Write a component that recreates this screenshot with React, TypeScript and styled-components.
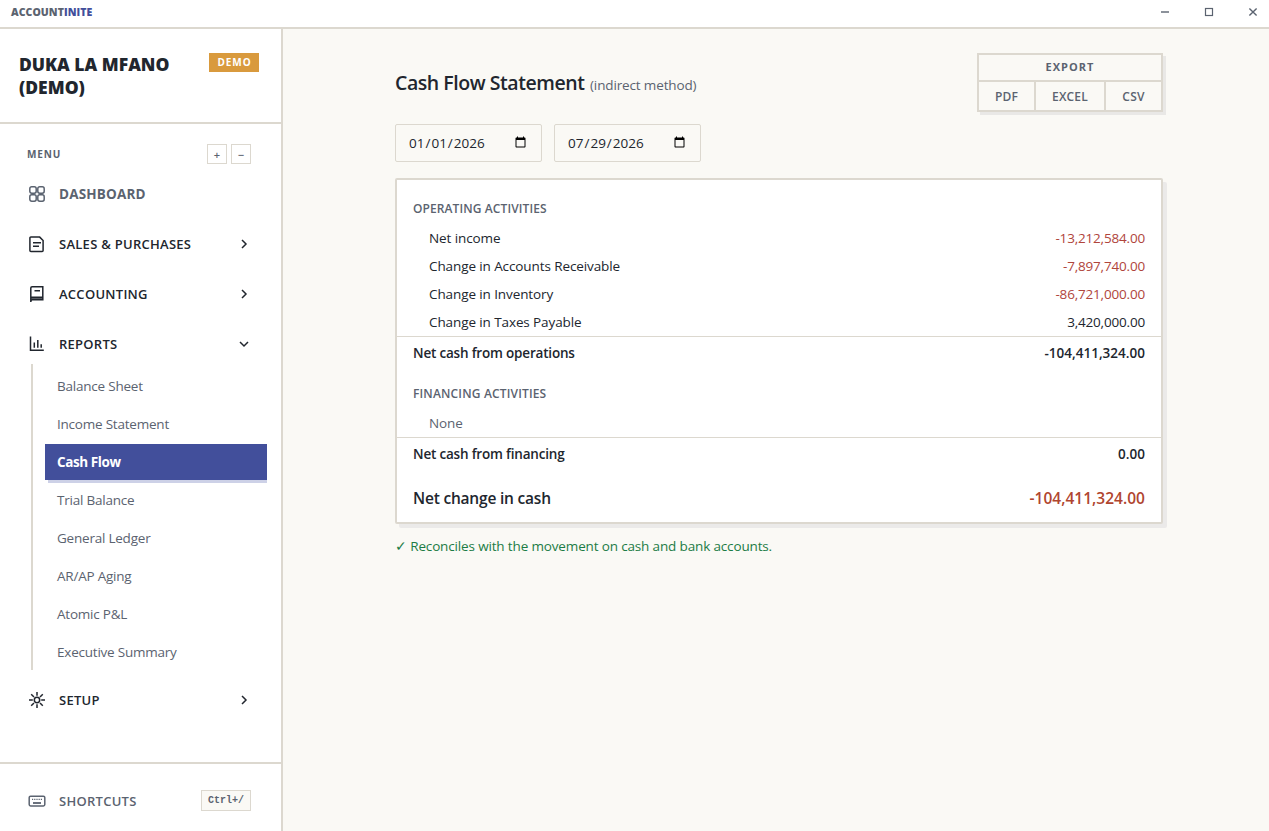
import React from "react";
import styled, { createGlobalStyle, css } from "styled-components";

const c = {
  ink: "#21262e",
  muted: "#5b6370",
  line: "#dcd8cf",
  page: "#faf9f5",
  brand: "#424f9b",
  brandSoft: "#cdd1e7",
  amber: "#d99a3d",
  red: "#b0453c",
  rust: "#b0452f",
  green: "#1c7c45",
};

const Global = createGlobalStyle`
  * { box-sizing: border-box; }
  body {
    margin: 0;
    background: ${c.page};
    color: ${c.ink};
    font-family: "Open Sans", "Noto Sans", sans-serif;
    font-size: 13.5px;
    overflow: hidden;
  }
`;

const Window = styled.div`
  height: 831px;
  display: flex;
  flex-direction: column;
`;

const TitleBar = styled.header`
  height: 29px;
  flex: none;
  display: flex;
  align-items: center;
  justify-content: space-between;
  padding: 0 10px 3px 11px;
  background: #fff;
  border-bottom: 2px solid ${c.line};
`;

const Brand = styled.span`
  font-size: 10.5px;
  font-weight: 800;
  line-height: 14px;
  letter-spacing: 0.06px;
  color: ${c.muted};
  em {
    font-style: normal;
    color: ${c.brand};
  }
`;

const WindowControls = styled.div`
  display: flex;
  gap: 32px;
  svg { display: block; }
`;

const Body = styled.div`
  flex: 1;
  min-height: 0;
  display: flex;
`;

const Sidebar = styled.aside`
  width: 283px;
  flex: none;
  display: flex;
  flex-direction: column;
  background: #fff;
  border-right: 2px solid ${c.line};
`;

const Company = styled.div`
  height: 95px;
  flex: none;
  display: flex;
  justify-content: space-between;
  align-items: flex-start;
  padding: 24px 22px 0 19px;
  border-bottom: 2px solid ${c.line};
`;

const CompanyName = styled.h2`
  margin: 0;
  width: 170px;
  font-size: 17.5px;
  font-weight: 800;
  line-height: 23px;
  letter-spacing: 0;
`;

const DemoBadge = styled.span`
  width: 50px;
  height: 19px;
  padding-left: 1px;
  text-align: center;
  background: ${c.amber};
  color: #fff;
  font-size: 10px;
  font-weight: 700;
  line-height: 19px;
  letter-spacing: 0.9px;
`;

const Nav = styled.nav`
  flex: 1;
  display: flex;
  flex-direction: column;
  padding: 20px 14px 0 15px;
`;

const MenuHead = styled.div`
  height: 20px;
  display: flex;
  align-items: center;
  gap: 4px;
  padding: 0 16px 0 12px;
  margin-bottom: 10px;
`;

const MenuLabel = styled.span`
  flex: 1;
  font-size: 10px;
  font-weight: 700;
  letter-spacing: 0.85px;
  color: ${c.muted};
`;

const SquareButton = styled.button`
  width: 20px;
  height: 20px;
  padding: 1px 0 0;
  background: #fff;
  border: 1px solid ${c.line};
  color: ${c.muted};
  font: 600 11px/16px "Open Sans", sans-serif;
`;

const NavRow = styled.a<{ $muted?: boolean; $big?: boolean }>`
  height: 40px;
  flex: none;
  display: flex;
  align-items: center;
  gap: 13px;
  padding: 0 16px 0 13px;
  margin-bottom: 10px;
  font-size: 13px;
  font-weight: 600;
  letter-spacing: 0.27px;
  color: ${(p) => (p.$muted ? c.muted : c.ink)};
  svg { display: block; flex: none; }
  ${(p) =>
    p.$big &&
    css`
      font-size: 13.5px;
      letter-spacing: 0.18px;
      font-weight: 700;
    `}
`;

const RowLabel = styled.span`
  flex: 1;
`;

const SubNav = styled.div`
  margin: -10px 0 10px 16px;
  padding: 4px 0 0 12px;
  border-left: 2px solid ${c.line};
  display: flex;
  flex-direction: column;
  gap: 2px;
  overflow: hidden;
`;

const SubItem = styled.a<{ $active?: boolean }>`
  height: 36px;
  padding-left: 12px;
  line-height: 36px;
  letter-spacing: -0.22px;
  color: ${c.muted};
  ${(p) =>
    p.$active &&
    css`
      background: ${c.brand};
      box-shadow: 3px 3px 0 ${c.brandSoft};
      color: #fff;
      font-weight: 700;
      letter-spacing: -0.4px;
    `}
`;

const SidebarFoot = styled.div`
  height: 69px;
  flex: none;
  padding: 17px 14px 0 15px;
  border-top: 2px solid ${c.line};
`;

const Kbd = styled.kbd`
  width: 50px;
  height: 21px;
  text-align: center;
  background: ${c.page};
  border: 1px solid ${c.line};
  color: ${c.muted};
  font: 700 10px/19px "Liberation Mono", monospace;
  letter-spacing: 0;
  margin-top: -1px;
`;

const Main = styled.main`
  flex: 1;
  padding: 24px 106px 0 112px;
`;

const PageHead = styled.div`
  height: 59px;
  display: flex;
  justify-content: space-between;
  margin-bottom: 12px;
`;

const Title = styled.h1`
  margin: 0;
  font-size: 19.5px;
  font-weight: 600;
  line-height: 60px;
  letter-spacing: -0.45px;
  small {
    margin-left: 1px;
    font-size: 13.5px;
    font-weight: 400;
    letter-spacing: -0.14px;
    color: ${c.muted};
  }
`;

const ExportBox = styled.div`
  width: 186px;
  height: 59px;
  border: 2px solid ${c.line};
  box-shadow: 3px 3px 0 #e9e8e6;
  color: ${c.muted};
`;

const ExportHead = styled.div`
  height: 27px;
  border-bottom: 2px solid ${c.line};
  text-align: center;
  font-size: 11px;
  font-weight: 700;
  line-height: 24px;
  letter-spacing: 1px;
`;

const ExportRow = styled.div`
  height: 28px;
  display: grid;
  grid-template-columns: 57px 70px 55px;
`;

const ExportButton = styled.button`
  padding: 2px 0 0;
  border: 0;
  border-right: 2px solid ${c.line};
  background: transparent;
  color: inherit;
  font: 600 12px/26px "Open Sans", sans-serif;
  letter-spacing: 0.2px;
  &:last-child { border-right: 0; }
`;

const Filters = styled.div`
  display: flex;
  gap: 12px;
  margin-bottom: 16px;
`;

const DateField = styled.input`
  width: 147px;
  height: 38px;
  padding: 0 12px;
  border: 1px solid ${c.line};
  border-radius: 2px;
  background: ${c.page};
  color: ${c.ink};
  font: 400 13.5px "Open Sans", sans-serif;
`;

const Card = styled.section`
  height: 346px;
  padding: 15px 0 0;
  background: #fff;
  border: 2px solid ${c.line};
  border-radius: 2px;
  box-shadow: 4px 4px 0 #ebeae9;
`;

const SectionLabel = styled.h3<{ $spaced?: boolean }>`
  margin: ${(p) => (p.$spaced ? "11px" : "0")} 0 1px;
  padding: 0 16px;
  height: 28px;
  font-size: 12px;
  font-weight: 600;
  line-height: 27px;
  letter-spacing: ${(p) => (p.$spaced ? "0.16px" : "0.1px")};
  color: ${c.muted};
`;

const Line = styled.div<{ $kind?: "total" | "grand"; $muted?: boolean }>`
  height: 28px;
  display: flex;
  justify-content: space-between;
  padding: 0 16px 0 32px;
  line-height: 28px;
  letter-spacing: -0.1px;
  color: ${(p) => (p.$muted ? c.muted : c.ink)};
  ${(p) =>
    p.$kind === "total" &&
    css`
      height: 33px;
      padding-left: 16px;
      border-top: 1px solid ${c.line};
      line-height: 32px;
      font-weight: 600;
      letter-spacing: -0.19px;
    `}
  ${(p) =>
    p.$kind === "grand" &&
    css`
      height: 44px;
      margin-top: 6px;
      padding-left: 16px;
      line-height: 44px;
      font-size: 15.5px;
      font-weight: 600;
      letter-spacing: -0.2px;
    `}
`;

const Amount = styled.span<{ $tone?: "red" | "rust"; $strong?: boolean }>`
  letter-spacing: ${(p) => (p.$strong ? "0.02px" : "-0.18px")};
  color: ${(p) => (p.$tone ? c[p.$tone] : "inherit")};
`;

const Note = styled.p`
  margin: 12px 0 0;
  line-height: 20px;
  letter-spacing: -0.15px;
  color: ${c.green};
`;

const Ico = ({ children }: { children: React.ReactNode }) => (
  <svg width="18" height="18" viewBox="0 0 18 18" fill="none" stroke="currentColor" strokeWidth="1.5">
    {children}
  </svg>
);

const GridIcon = () => (
  <Ico>
    <rect x="1.8" y="1.8" width="6.4" height="6.4" rx="1.9" />
    <rect x="9.8" y="1.8" width="6.4" height="6.4" rx="1.9" />
    <rect x="1.8" y="9.8" width="6.4" height="6.4" rx="1.9" />
    <rect x="9.8" y="9.8" width="6.4" height="6.4" rx="1.9" />
  </Ico>
);
const DocIcon = () => (
  <Ico>
    <path d="M2.9 2.1h8.8l3.4 3.4v9.9a1 1 0 0 1-1 1H2.9a1 1 0 0 1-1-1V3.1a1 1 0 0 1 1-1Z" />
    <path d="M5 7.8h8M5 11.2h6" />
  </Ico>
);
const BookIcon = () => (
  <Ico>
    <path d="M2.8 16.9V3.1c0-.8.6-1.3 1.3-1.3h10.7v12.9H4.4c-.9 0-1.6.8-1.6 2.2M2.8 12.2h12M6.5 5.8h5.5" />
    <path d="M3 12.2h11.8v2.4H3z" fill="currentColor" stroke="none" opacity=".75" />
  </Ico>
);
const ChartIcon = () => (
  <Ico>
    <path d="M2.5 1.6v13.7h13.3" />
    <path d="M6.3 7.6v5.2M9.8 5v7.8M13.2 9.2v3.6" />
  </Ico>
);
const GearIcon = () => (
  <Ico>
    <circle cx="9" cy="9" r="2.7" />
    <path d="M9 1v3.8M9 13.2v3.8M1 9h3.8M13.2 9h3.8M3.2 3.2l2.8 2.8M12 12l2.8 2.8M3.2 14.8l2.8-2.8M12 6l2.8-2.8" />
  </Ico>
);
const KeyboardIcon = () => (
  <Ico>
    <rect x="1.2" y="4.2" width="15.6" height="9.8" rx="1.4" />
    <path d="M4 7.4h10" strokeDasharray="1.2 1" strokeWidth="1.4" />
    <path d="M5 11h8" strokeWidth="1.8" />
  </Ico>
);
const Chevron = ({ open }: { open?: boolean }) => (
  <svg width="14" height="14" viewBox="0 0 14 14" fill="none" stroke="currentColor" strokeWidth="1.5">
    <path d={open ? "M3 5l4 4 4-4" : "M5 3l4 4-4 4"} />
  </svg>
);

const reports = [
  "Balance Sheet",
  "Income Statement",
  "Cash Flow",
  "Trial Balance",
  "General Ledger",
  "AR/AP Aging",
  "Atomic P&L",
  "Executive Summary",
];

const operating: { label: string; amount: string; negative?: boolean }[] = [
  { label: "Net income", amount: "-13,212,584.00", negative: true },
  { label: "Change in Accounts Receivable", amount: "-7,897,740.00", negative: true },
  { label: "Change in Inventory", amount: "-86,721,000.00", negative: true },
  { label: "Change in Taxes Payable", amount: "3,420,000.00" },
];

export default function App() {
  return (
    <Window>
      <Global />
      <TitleBar>
        <Brand>
          ACCOUNT<em>INITE</em>
        </Brand>
        <WindowControls>
          <svg width="12" height="12" viewBox="0 0 12 12" stroke={c.muted} strokeWidth="1.4">
            <path d="M2 6h8" />
          </svg>
          <svg width="12" height="12" viewBox="0 0 12 12" fill="none" stroke={c.muted} strokeWidth="1.2">
            <rect x="2.5" y="2.5" width="7" height="7" />
          </svg>
          <svg width="12" height="12" viewBox="0 0 12 12" stroke={c.muted} strokeWidth="1.4">
            <path d="M2.4 2.4l7.2 7.2M9.6 2.4l-7.2 7.2" />
          </svg>
        </WindowControls>
      </TitleBar>
      <Body>
        <Sidebar>
          <Company>
            <CompanyName>DUKA LA MFANO (DEMO)</CompanyName>
            <DemoBadge>DEMO</DemoBadge>
          </Company>
          <Nav>
            <MenuHead>
              <MenuLabel>MENU</MenuLabel>
              <SquareButton>+</SquareButton>
              <SquareButton>−</SquareButton>
            </MenuHead>
            <NavRow $muted $big>
              <GridIcon />
              <RowLabel>DASHBOARD</RowLabel>
            </NavRow>
            <NavRow>
              <DocIcon />
              <RowLabel>SALES &amp; PURCHASES</RowLabel>
              <Chevron />
            </NavRow>
            <NavRow>
              <BookIcon />
              <RowLabel>ACCOUNTING</RowLabel>
              <Chevron />
            </NavRow>
            <NavRow>
              <ChartIcon />
              <RowLabel>REPORTS</RowLabel>
              <Chevron open />
            </NavRow>
            <SubNav>
              {reports.map((name) => (
                <SubItem key={name} $active={name === "Cash Flow"}>
                  {name}
                </SubItem>
              ))}
            </SubNav>
            <NavRow>
              <GearIcon />
              <RowLabel>SETUP</RowLabel>
              <Chevron />
            </NavRow>
          </Nav>
          <SidebarFoot>
            <NavRow $muted>
              <KeyboardIcon />
              <RowLabel>SHORTCUTS</RowLabel>
              <Kbd>Ctrl+/</Kbd>
            </NavRow>
          </SidebarFoot>
        </Sidebar>
        <Main>
          <PageHead>
            <Title>
              Cash Flow Statement <small>(indirect method)</small>
            </Title>
            <ExportBox>
              <ExportHead>EXPORT</ExportHead>
              <ExportRow>
                <ExportButton>PDF</ExportButton>
                <ExportButton>EXCEL</ExportButton>
                <ExportButton>CSV</ExportButton>
              </ExportRow>
            </ExportBox>
          </PageHead>
          <Filters>
            <DateField type="date" defaultValue="2026-01-01" />
            <DateField type="date" defaultValue="2026-07-29" />
          </Filters>
          <Card>
            <SectionLabel>OPERATING ACTIVITIES</SectionLabel>
            {operating.map((row) => (
              <Line key={row.label}>
                <span>{row.label}</span>
                <Amount $tone={row.negative ? "red" : undefined}>{row.amount}</Amount>
              </Line>
            ))}
            <Line $kind="total">
              <span>Net cash from operations</span>
              <Amount $strong>-104,411,324.00</Amount>
            </Line>
            <SectionLabel $spaced>FINANCING ACTIVITIES</SectionLabel>
            <Line $muted>
              <span>None</span>
            </Line>
            <Line $kind="total">
              <span>Net cash from financing</span>
              <Amount $strong>0.00</Amount>
            </Line>
            <Line $kind="grand">
              <span>Net change in cash</span>
              <Amount $strong $tone="rust">-104,411,324.00</Amount>
            </Line>
          </Card>
          <Note>✓ Reconciles with the movement on cash and bank accounts.</Note>
        </Main>
      </Body>
    </Window>
  );
}
